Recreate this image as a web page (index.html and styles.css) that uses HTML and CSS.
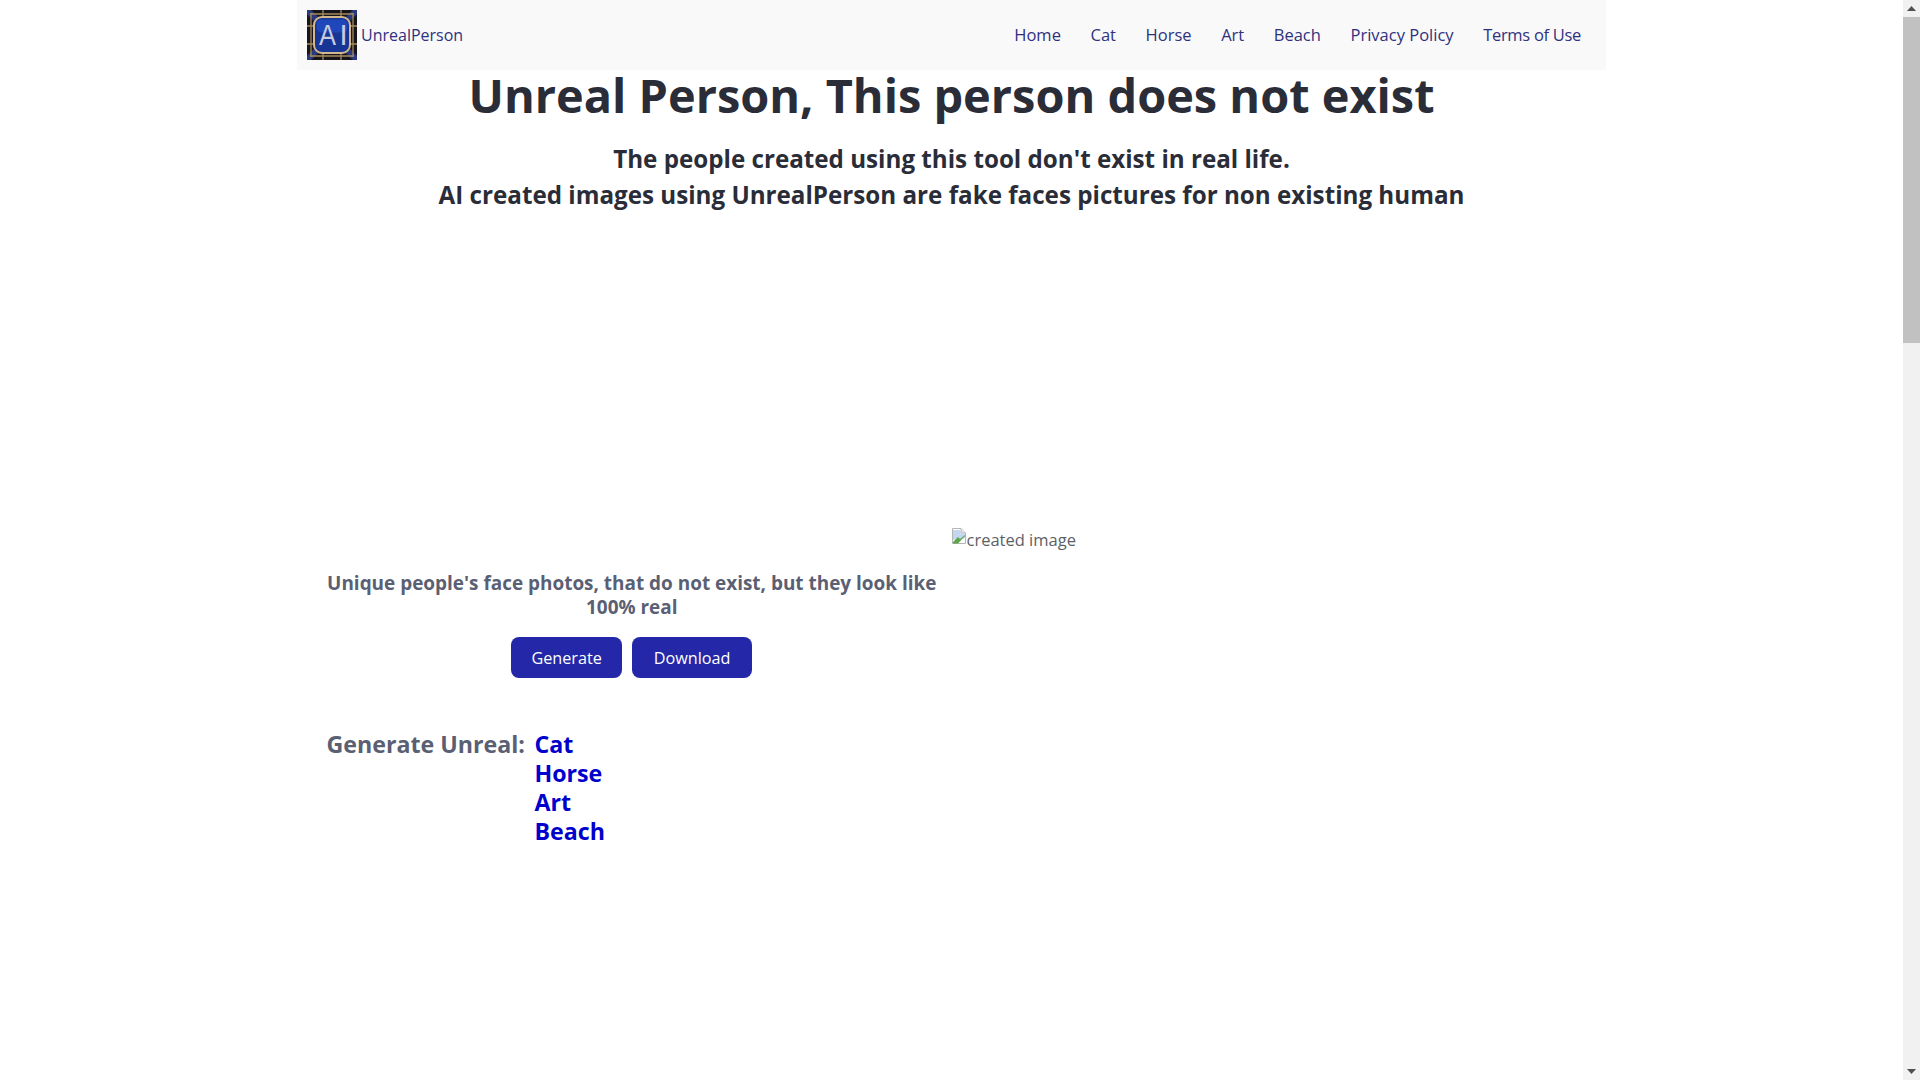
FILE: index.html
```html
<!DOCTYPE html>
<html lang="en">
<head>
<meta charset="utf-8">
<title>Unreal Person</title>
<link rel="stylesheet" href="styles.css">
</head>
<body>
<div class="shell">
  <main class="page">
    <div class="wrap">
      <nav class="navbar">
        <a class="brand">
          <svg class="logo" viewBox="0 0 50 50" width="50" height="50">
            <rect width="50" height="50" fill="#17151a"/>
            <path d="M0 0L10 10M50 0L40 10M0 50L10 40M50 50L40 40" stroke="#2b3a7c" stroke-width="6"/>
            <path d="M3 4H47M3 46H47M4 3V47M46 3V47M16 0V6M34 0V6M16 44V50M34 44V50M0 16H6M0 34H6M44 16H50M44 34H50" fill="none" stroke="#a58a5e" stroke-width="1.3"/>
            <rect x="7" y="7" width="36" height="36" rx="8" fill="#163595" stroke="#d3b78c" stroke-width="2"/>
            <rect x="9.5" y="9.5" width="31" height="13" rx="5" fill="#1f47bb"/>
            <text x="12" y="35" class="logo-text" textLength="17" lengthAdjust="spacingAndGlyphs">A</text>
            <text x="32.5" y="35" class="logo-text">I</text>
          </svg>
          <span>UnrealPerson</span>
        </a>
        <ul class="nav-links">
          <li>Home</li><li>Cat</li><li>Horse</li><li>Art</li><li>Beach</li><li>Privacy Policy</li><li>Terms of Use</li>
        </ul>
      </nav>
      <h1 class="title">Unreal Person, This person does not exist</h1>
      <h2 class="subtitle">The people created using this tool don't exist in real life.<br>AI created images using UnrealPerson are fake faces pictures for non existing human</h2>
      <div class="ad-space"></div>
      <section class="row">
        <div class="col-left">
          <p class="lead">Unique people's face photos, that do not exist, but they look like 100% real</p>
          <div class="buttons">
            <button class="btn">Generate</button>
            <button class="btn">Download</button>
          </div>
          <div class="more">
            <span class="more-label">Generate Unreal:</span>
            <ul class="more-links">
              <li>Cat</li><li>Horse</li><li>Art</li><li>Beach</li>
            </ul>
          </div>
        </div>
        <div class="col-right">
          <span class="broken">
            <svg class="broken-icon" viewBox="0 0 16 16" width="16" height="16">
              <path d="M1.5 .5H10L14.5 5V15.5H1.5Z" fill="#fff" stroke="#b5b5b5"/>
              <path d="M10 .5V5H14.5" fill="#e8e8e8" stroke="#b5b5b5"/>
              <path d="M2 2H9.5V5.5H14V10L2 12Z" fill="#c5d6f2"/>
              <path d="M2 14L7 9L9 11L14 7V8L7 15.5H2Z" fill="#5aa64a"/>
            </svg><span>created image</span>
          </span>
        </div>
      </section>
    </div>
  </main>
  <aside class="scrollbar">
    <div class="arrow"><svg viewBox="0 0 9 5" width="9" height="5"><path d="M4.5 0L9 5H0Z" fill="#505050"/></svg></div>
    <div class="thumb"></div>
    <div class="track"></div>
    <div class="arrow"><svg viewBox="0 0 9 5" width="9" height="5"><path d="M0 0H9L4.5 5Z" fill="#505050"/></svg></div>
  </aside>
</div>
</body>
</html>
```
FILE: styles.css
```css
* { box-sizing: border-box; }
html, body { margin: 0; height: 100%; overflow: hidden; background: #fff; }
body { font-family: "Open Sans", "Noto Sans", "Liberation Sans", sans-serif; color: #2a2d38; font-size: 16px; }
.shell { display: flex; height: 100vh; }
.page { flex: 1; min-width: 0; overflow: hidden; display: flex; justify-content: center; }
.wrap { width: 1309px; }
.navbar { height: 70px; background: #f9f9f9; display: flex; align-items: center; justify-content: space-between; padding: 0 10px; }
.brand { display: flex; align-items: center; gap: 4px; color: #2f3180; font-size: 16px; }
.logo { display: block; }
.logo-text { font-family: "Liberation Sans", sans-serif; font-size: 29px; fill: #c8cce0; }
.nav-links { list-style: none; margin: 0 15px 0 0; padding: 0 0 2px; display: flex; gap: 29.6px; color: #2f3180; font-size: 16.5px; }
.nav-links li:last-child { letter-spacing: -.3px; }
.title { margin: -4px 0 0; text-align: center; font-size: 46.9px; font-weight: 700; line-height: 58px; }
.subtitle { margin: 17px 0 0; text-align: center; font-size: 24.2px; font-weight: 700; line-height: 36px; }
.ad-space { height: 312px; }
.row { display: flex; }
.col-left { width: 654.5px; padding: 0 8px 0 23px; }
.col-right { flex: 1; padding-top: 1px; margin-left: -1px; font-size: 16.5px; color: #5c5f66; }
.lead { margin: 46px 0 0; text-align: center; font-size: 18.95px; font-weight: 700; line-height: 24px; color: #5a5f73; }
.buttons { display: flex; justify-content: center; gap: 10.5px; margin-top: 18px; }
.btn { height: 41px; padding: 0 20px; background: #2428a8; color: #fff; border: 0; border-radius: 8px; font: inherit; font-size: 16.2px; }
.btn + .btn { padding: 0 21.5px; }
.more { display: flex; gap: 9.5px; margin: 52px 0 0 6.5px; font-size: 23.2px; font-weight: 700; line-height: 29px; }
.more-label { color: #5a5f73; }
.more-links { list-style: none; margin: 0; padding: 0; color: #0000cd; }
.broken { display: inline-flex; align-items: flex-start; }
.broken-icon { flex: none; }
.scrollbar { width: 17px; flex: none; background: #f1f1f1; display: flex; flex-direction: column; }
.arrow { height: 17px; display: flex; align-items: center; justify-content: center; }
.thumb { height: 326px; background: #c1c1c1; }
.track { flex: 1; }
```
